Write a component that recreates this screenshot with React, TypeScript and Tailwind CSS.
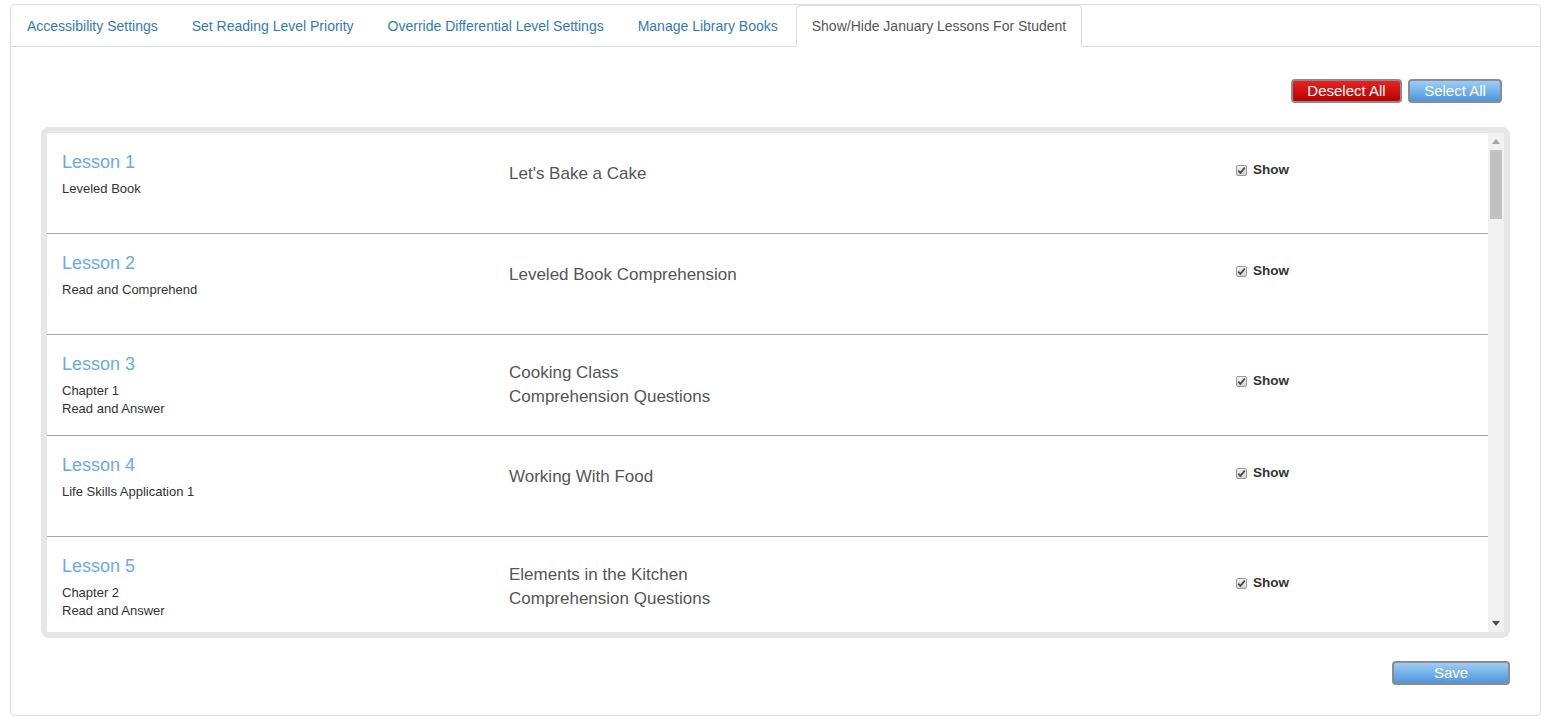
import React from 'react';

const TABS = [
  'Accessibility Settings',
  'Set Reading Level Priority',
  'Override Differential Level Settings',
  'Manage Library Books',
  'Show/Hide January Lessons For Student',
];

const LESSONS = [
  { title: 'Lesson 1', sub: ['Leveled Book'], name: ["Let's Bake a Cake"] },
  { title: 'Lesson 2', sub: ['Read and Comprehend'], name: ['Leveled Book Comprehension'] },
  { title: 'Lesson 3', sub: ['Chapter 1', 'Read and Answer'], name: ['Cooking Class', 'Comprehension Questions'] },
  { title: 'Lesson 4', sub: ['Life Skills Application 1'], name: ['Working With Food'] },
  { title: 'Lesson 5', sub: ['Chapter 2', 'Read and Answer'], name: ['Elements in the Kitchen', 'Comprehension Questions'] },
];

function CheckBox() {
  return (
    <span className="w-[11px] h-[11px] rounded-[2px] border border-[#9a9a9a] bg-gradient-to-b from-[#f0f0f0] to-[#d4d4d4] flex items-center justify-center flex-shrink-0">
      <svg width="9" height="9" viewBox="0 0 9 9">
        <path d="M1.3 4.6 L3.4 6.9 L7.8 1.6" fill="none" stroke="#4a4a4a" strokeWidth="1.7" />
      </svg>
    </span>
  );
}

function LessonRow({ lesson }: { lesson: (typeof LESSONS)[number] }) {
  return (
    <div className="h-[101px] flex-shrink-0 border-b border-[#a5a5a5]">
      <div className="grid grid-cols-[447px_727px_1fr] items-center pt-[19px] pl-[15px]">
        <div>
          <div className="text-[18px] leading-[20px] text-[#6aaae8]">{lesson.title}</div>
          <div className="mt-[8px] text-[13px] leading-[18px] text-[#333]">
            {lesson.sub.map(s => (
              <div key={s}>{s}</div>
            ))}
          </div>
        </div>
        <div className="text-[17px] leading-[24px] text-[#555] -mt-[2px]">
          {lesson.name.map(n => (
            <div key={n}>{n}</div>
          ))}
        </div>
        <label className="flex items-center gap-[6px] -mt-[9px]">
          <CheckBox />
          <span className="text-[13.5px] font-bold text-[#333]">Show</span>
        </label>
      </div>
    </div>
  );
}

export default function App() {
  return (
    <div className="w-[1548px] h-[721px] bg-white pt-[4px] pl-[10px] font-['Liberation_Sans',Arial,sans-serif]">
      <div className="w-[1531px] h-[712px] border border-[#dddddd] rounded-[4px] flex flex-col">
        {/* Tabs */}
        <ul className="flex border-b border-[#dddddd] h-[42px]">
          {TABS.map((t, i) => {
            const active = i === TABS.length - 1;
            return (
              <li
                key={t}
                className={
                  active
                    ? 'mr-[2px] px-[15px] pt-[10px] h-[42px] text-[14px] leading-[20px] text-[#555] bg-white border border-[#dddddd] border-b-white rounded-t-[4px]'
                    : 'mr-[2px] px-[15px] pt-[10px] h-[41px] text-[14px] leading-[20px] text-[#337ab7] border border-transparent'
                }
              >
                {t}
              </li>
            );
          })}
        </ul>

        <div className="flex flex-col px-[30px]">
          {/* Top buttons */}
          <div className="flex justify-end gap-[6px] mt-[32px] pr-[8px]">
            <button className="w-[111px] h-[24px] rounded-[4px] border-2 border-[#8c8c8c] bg-gradient-to-b from-[#e82020] to-[#b70000] text-white text-[15px] leading-[20px]">
              Deselect All
            </button>
            <button className="w-[94px] h-[24px] rounded-[4px] border-2 border-[#8c8c8c] bg-gradient-to-b from-[#9ccdf6] to-[#4d96dd] text-white text-[15px] leading-[20px]">
              Select All
            </button>
          </div>

          {/* Lesson list */}
          <div className="mt-[24px] h-[511px] border-[6px] border-[#e6e6e6] rounded-[8px] flex overflow-hidden">
            <div className="flex-1 flex flex-col overflow-hidden bg-white">
              {LESSONS.map(l => (
                <LessonRow key={l.title} lesson={l} />
              ))}
            </div>
            {/* Scrollbar */}
            <div className="w-[16px] bg-[#f1f1f1] flex flex-col items-center">
              <div className="h-[17px] flex items-center justify-center">
                <svg width="8" height="5" viewBox="0 0 8 5">
                  <path d="M0 5 L4 0 L8 5 Z" fill="#a3a3a3" />
                </svg>
              </div>
              <div className="w-[12px] h-[69px] bg-[#c1c1c1]" />
              <div className="flex-1" />
              <div className="h-[17px] flex items-center justify-center">
                <svg width="8" height="5" viewBox="0 0 8 5">
                  <path d="M0 0 L8 0 L4 5 Z" fill="#505050" />
                </svg>
              </div>
            </div>
          </div>

          {/* Save */}
          <div className="flex justify-end mt-[23px]">
            <button className="w-[118px] h-[24px] rounded-[4px] border-2 border-[#8c8c8c] bg-gradient-to-b from-[#9ccdf6] to-[#4d96dd] text-white text-[15px] leading-[20px]">
              Save
            </button>
          </div>
        </div>
      </div>
    </div>
  );
}
